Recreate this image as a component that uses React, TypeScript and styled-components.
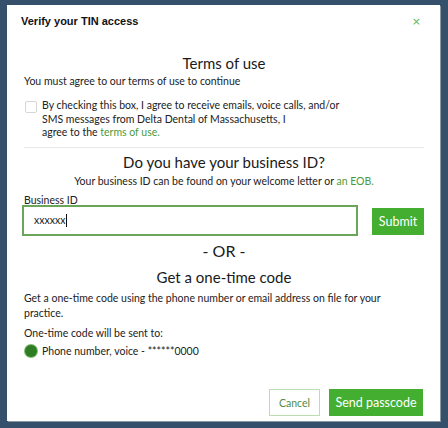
import React from "react";
import styled, { createGlobalStyle } from "styled-components";

const Global = createGlobalStyle`
  html, body { margin: 0; padding: 0; background: #34506a; }
  body { font-family: "Lato", "Open Sans", sans-serif; color: #222; }
  * { box-sizing: border-box; }
`;

const Page = styled.div`
  width: 448px;
  height: 428px;
  padding: 5px 8px 7px 7px;
`;

const Modal = styled.div`
  width: 433px;
  height: 416px;
  background: #fff;
  box-shadow: 1px 1px 0 #8b97a2;
  display: flex;
  flex-direction: column;
`;

const Header = styled.div`
  display: flex;
  align-items: center;
  justify-content: space-between;
  padding: 0 19px 0 14px;
  height: 32px;
`;

const Title = styled.h1`
  margin: 0;
  font-family: "Liberation Sans", Arial, sans-serif;
  font-weight: 700;
  font-size: 11px;
  color: #111;
`;

const Close = styled.button`
  border: none;
  background: none;
  padding: 0;
  color: #5cb85c;
  font-size: 11px;
  line-height: 1;
  font-family: "DejaVu Sans", sans-serif;
  cursor: pointer;
`;

const Body = styled.div`
  flex: 1;
  display: flex;
  flex-direction: column;
  padding: 0 16px 0 17px;
`;

const SectionTitle = styled.h2<{ $mt: number }>`
  margin: ${(p) => p.$mt}px 0 0;
  text-align: center;
  font-weight: 400;
  font-size: 15px;
  line-height: 20px;
  color: #1a1a1a;
`;

const Text = styled.p<{ $mt: number; $center?: boolean }>`
  margin: ${(p) => p.$mt}px 0 0;
  max-width: 370px;
  font-size: 10.5px;
  line-height: 15px;
  color: #222;
  text-align: ${(p) => (p.$center ? "center" : "left")};
  align-self: ${(p) => (p.$center ? "center" : "flex-start")};
`;

const Link = styled.a`
  color: #4b9b3b;
  text-decoration: none;
`;

const CheckRow = styled.label`
  display: flex;
  gap: 5px;
  margin-top: 10px;
  padding-left: 1px;
`;

const Box = styled.span`
  flex: none;
  width: 12px;
  height: 12px;
  margin-top: 2px;
  border: 1px solid #d6d6d6;
  border-radius: 2px;
  background: #fff;
`;

const CheckText = styled.span`
  font-size: 10.5px;
  line-height: 13.5px;
  color: #222;
`;

const Divider = styled.hr`
  margin: 7px 0 0;
  border: none;
  border-top: 1px solid #e8e8e8;
`;

const Label = styled.div`
  margin-top: 6px;
  font-size: 10.5px;
  line-height: 11px;
  color: #222;
`;

const InputRow = styled.div`
  display: flex;
  align-items: flex-start;
  justify-content: space-between;
  margin: -1px 0 0 -2px;
`;

const Input = styled.div`
  width: 336px;
  height: 31px;
  border: 2px solid #6aa55a;
  padding: 0 10px;
  display: flex;
  align-items: center;
  font-size: 10.5px;
  color: #222;
`;

const Caret = styled.span`
  display: inline-block;
  width: 1px;
  height: 13px;
  background: #111;
  margin-left: 1px;
`;

const Button = styled.button<{ $variant?: "primary" | "outline"; $w: number }>`
  width: ${(p) => p.$w}px;
  height: 27px;
  padding: 0;
  font-family: inherit;
  font-size: 12.5px;
  border-radius: 0;
  cursor: pointer;
  background: ${(p) => (p.$variant === "outline" ? "#fff" : "#43ae2f")};
  color: ${(p) => (p.$variant === "outline" ? "#4f8a43" : "#fff")};
  border: 1px solid ${(p) => (p.$variant === "outline" ? "#b9dfb1" : "#43ae2f")};
`;

const SubmitButton = styled(Button)`
  margin-top: 3px;
`;

const CancelButton = styled(Button)`
  font-size: 10.5px;
`;

const OrText = styled.div`
  margin-top: 5px;
  text-align: center;
  font-size: 16px;
  line-height: 20px;
  color: #1a1a1a;
`;

const RadioRow = styled.label`
  display: flex;
  align-items: center;
  gap: 5px;
  margin-top: 4px;
  padding-left: 1px;
  font-size: 10.5px;
  color: #222;
`;

const Radio = styled.span`
  width: 12px;
  height: 12px;
  border-radius: 50%;
  background: #2f7d22;
  box-shadow: 0 0 0 1px #7fba75;
`;

const Footer = styled.div`
  display: flex;
  justify-content: flex-end;
  gap: 9px;
  padding: 0 17px 5px 0;
`;

export default function App() {
  return (
    <>
      <Global />
      <Page>
        <Modal>
          <Header>
            <Title>Verify your TIN access</Title>
            <Close aria-label="Close">×</Close>
          </Header>
          <Body>
            <SectionTitle $mt={16}>Terms of use</SectionTitle>
            <Text $mt={1}>You must agree to our terms of use to continue</Text>
            <CheckRow>
              <Box />
              <CheckText>
                By checking this box, I agree to receive emails, voice calls, and/or
                <br />
                SMS messages from Delta Dental of Massachusetts, I
                <br />
                agree to the <Link>terms of use.</Link>
              </CheckText>
            </CheckRow>
            <Divider />
            <SectionTitle $mt={4}>Do you have your business ID?</SectionTitle>
            <Text $mt={2} $center>
              Your business ID can be found on your welcome letter or <Link>an EOB.</Link>
            </Text>
            <Label>Business ID</Label>
            <InputRow>
              <Input>
                xxxxxx
                <Caret />
              </Input>
              <SubmitButton $w={52}>Submit</SubmitButton>
            </InputRow>
            <OrText>- OR -</OrText>
            <SectionTitle $mt={6}>Get a one-time code</SectionTitle>
            <Text $mt={4}>
              Get a one-time code using the phone number or email address on file for your practice.
            </Text>
            <Text $mt={5}>One-time code will be sent to:</Text>
            <RadioRow>
              <Radio />
              Phone number, voice - ******0000
            </RadioRow>
          </Body>
          <Footer>
            <CancelButton $variant="outline" $w={51}>
              Cancel
            </CancelButton>
            <Button $w={94}>Send passcode</Button>
          </Footer>
        </Modal>
      </Page>
    </>
  );
}
